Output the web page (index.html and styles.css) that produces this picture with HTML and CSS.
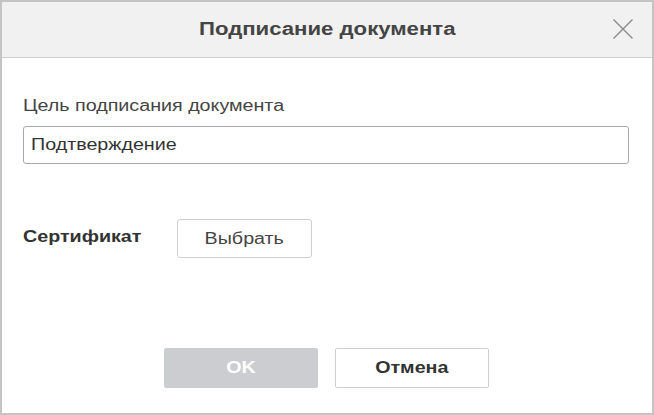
FILE: index.html
```html
<!DOCTYPE html>
<html lang="ru">
<head>
<meta charset="utf-8">
<link rel="stylesheet" href="styles.css">
</head>
<body>
<div class="dialog">
  <div class="header">
    <span class="title wide">Подписание документа</span>
    <span class="close">
      <svg width="22" height="22" viewBox="0 0 22 22"><path d="M1.5 1.5 L20.5 20.5 M20.5 1.5 L1.5 20.5" stroke="#8a8a8a" stroke-width="1.4" fill="none"/></svg>
    </span>
  </div>
  <div class="body">
    <div class="label"><span class="wide left">Цель подписания документа</span></div>
    <div class="input"><span class="wide left">Подтверждение</span></div>
    <div class="cert-row">
      <span class="cert-label"><span class="wide left">Сертификат</span></span>
      <span class="btn select"><span class="wide">Выбрать</span></span>
    </div>
  </div>
  <div class="footer">
    <span class="btn ok"><span class="wide">OK</span></span>
    <span class="btn cancel"><span class="wide">Отмена</span></span>
  </div>
</div>
</body>
</html>
```
FILE: styles.css
```css
html, body { margin: 0; padding: 0; background: #fff; }
body { font-family: "Liberation Sans", Arial, sans-serif; color: #444; }
.wide { display: inline-block; transform: scaleX(1.23); transform-origin: center; white-space: nowrap; }
.wide.left { transform-origin: left center; }
.dialog {
  width: 654px; height: 415px; box-sizing: border-box;
  border: 2px solid #c4c4c4;
  display: flex; flex-direction: column;
}
.header {
  height: 56px; box-sizing: border-box;
  background: #f1f1f1; border-bottom: 1px solid #cfcfcf;
  display: flex; align-items: center; justify-content: center;
  position: relative;
}
.title { font-size: 18px; font-weight: bold; color: #444; }
.close { position: absolute; right: 18px; top: 16px; width: 22px; height: 22px; }
.close svg { display: block; }
.body { padding: 38px 23px 0 21px; flex: 1; }
.label { font-size: 16px; line-height: 20px; color: #444; }
.input {
  margin-top: 10px; height: 38px; box-sizing: border-box;
  border: 1px solid #a9a9a9; border-radius: 3px;
  padding: 0 7px; display: flex; align-items: center;
  font-size: 16px; color: #333;
}
.cert-row { margin-top: 55px; display: flex; align-items: center; }
.cert-label { font-size: 16px; font-weight: bold; color: #333; width: 154px; margin-top: -4px; }
.btn {
  box-sizing: border-box; display: inline-flex; align-items: center; justify-content: center;
  border: 1px solid #cfcfcf; border-radius: 3px; background: #fff; font-size: 16px;
}
.select { width: 135px; height: 39px; color: #444; }
.footer { display: flex; justify-content: center; gap: 17px; padding-bottom: 25px; padding-right: 1px; }
.ok { width: 154px; height: 40px; background: #cbcdd0; border-color: #cbcdd0; color: #fff; font-weight: bold; border-radius: 2px; }
.cancel { width: 154px; height: 40px; color: #333; font-weight: bold; border-radius: 2px; }
```
